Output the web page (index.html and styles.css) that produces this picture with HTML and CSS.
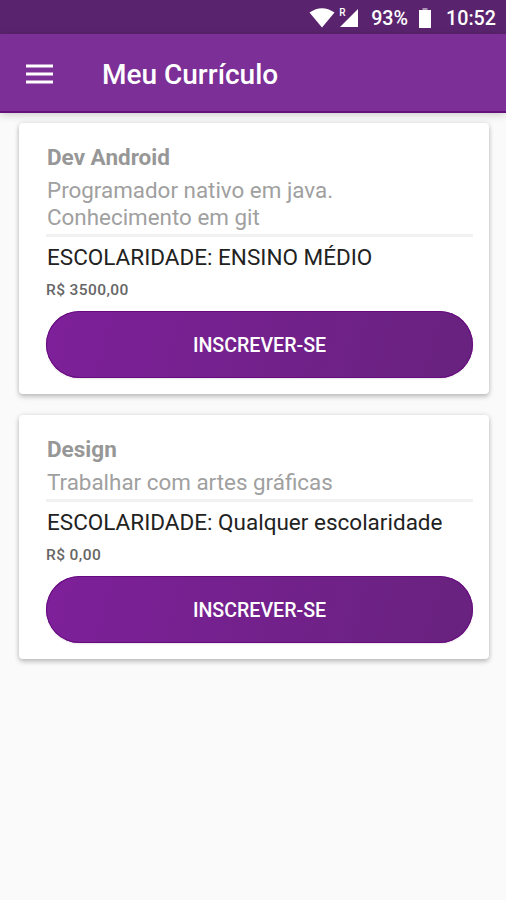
FILE: index.html
```html
<!DOCTYPE html>
<html lang="pt-BR">
<head>
<meta charset="utf-8">
<title>Meu Currículo</title>
<link rel="stylesheet" href="styles.css">
</head>
<body>
<div class="status">
  <svg class="wifi" width="26" height="20" viewBox="0 0 26 20"><path d="M.5 4.500Q13-4 25.500 4.500L13 19.500Z" fill="#fff"/></svg>
  <div class="signal">
    <span class="roaming">R</span>
    <svg width="18" height="18" viewBox="0 0 18 18"><path d="M0 18L18 0V18Z" fill="#fff"/></svg>
  </div>
  <span class="percent">93%</span>
  <svg class="battery" width="12" height="20" viewBox="0 0 12 20"><path d="M3.500 0h5v2H3.500z" fill="#fff" opacity=".5"/><path d="M0 2h12v18H0z" fill="#fff"/></svg>
  <span class="clock">10:52</span>
</div>
<header class="appbar">
  <svg class="menu" width="28" height="20" viewBox="0 0 28 20"><path d="M0 2h27M0 10h27M0 18h27" stroke="#fff" stroke-width="3"/></svg>
  <h1 class="heading">Meu Currículo</h1>
</header>
<main class="list">
  <article class="card">
    <h2 class="title">Dev Android</h2>
    <p class="desc">Programador nativo em java.<br>Conhecimento em git</p>
    <hr class="rule">
    <p class="school">ESCOLARIDADE: ENSINO MÉDIO</p>
    <p class="pay">R$ 3500,00</p>
    <button class="apply">INSCREVER-SE</button>
  </article>
  <article class="card">
    <h2 class="title">Design</h2>
    <p class="desc">Trabalhar com artes gráficas</p>
    <hr class="rule">
    <p class="school">ESCOLARIDADE: Qualquer escolaridade</p>
    <p class="pay">R$ 0,00</p>
    <button class="apply">INSCREVER-SE</button>
  </article>
</main>
</body>
</html>
```
FILE: styles.css
```css
* { box-sizing: border-box; margin: 0; padding: 0; }
body {
  min-height: 900px;
  background: #fafafa;
  font-family: Roboto, "Liberation Sans", sans-serif;
  white-space: nowrap;
}
.status {
  display: flex;
  height: 34px;
  padding: 2px 10px 0 0;
  align-items: center;
  justify-content: flex-end;
  background: #59246d;
  color: #fff;
  font-size: 19.7px;
  font-weight: 500;
}
.signal { position: relative; margin: 0 13px 0 5px; height: 18px; }
.signal svg { display: block; }
.roaming { position: absolute; left: -1px; top: -1px; font-size: 10px; line-height: 10px; }
.battery { margin: 0 15px 0 11px; }
.appbar {
  position: relative;
  display: flex;
  height: 79px;
  padding: 2px 0 0 26px;
  align-items: center;
  background: #7c2f96;
  border-bottom: 2px solid #65107f;
  box-shadow: 0 2px 8px rgba(0,0,0,.18);
}
.heading {
  padding-top: 2px;
  margin-left: 48px;
  color: #fff;
  font-size: 28px;
  font-weight: 500;
}
.list { padding: 10px 17px 0 19px; }
.card {
  margin-bottom: 21.5px;
  padding: 20.5px 16px 16px 28px;
  background: #fff;
  border-radius: 4px;
  box-shadow: 0 3px 5px rgba(0,0,0,.2), 0 0 5px rgba(0,0,0,.12);
}
.title {
  height: 33px;
  color: #979797;
  font-size: 22.5px;
  font-weight: 700;
  line-height: 26.5px;
}
.desc { color: #a0a0a0; font-size: 22.4px; line-height: 27px; }
.rule { height: 3px; margin: 3.500px 0 6.500px -1px; border: 0; background: #f1f1f1; }
.school { color: #222; font-size: 22.5px; line-height: 26.5px; }
.pay {
  margin: 10.5px 0 12px -1px;
  color: #666;
  font-size: 15.500px;
  font-weight: 500;
  letter-spacing: .4px;
  line-height: 18px;
}
.apply {
  display: block;
  width: 427px;
  height: 67px;
  margin-left: -1px;
  padding-top: 3px;
  border: 0;
  border-radius: 34px;
  background: linear-gradient(105deg, #7e209a, #68227e);
  box-shadow: inset 0 0 0 1px #680b80, 0 1px 2px rgba(0,0,0,.1);
  color: #fff;
  font-family: inherit;
  font-size: 19.6px;
  font-weight: 500;
}
```
